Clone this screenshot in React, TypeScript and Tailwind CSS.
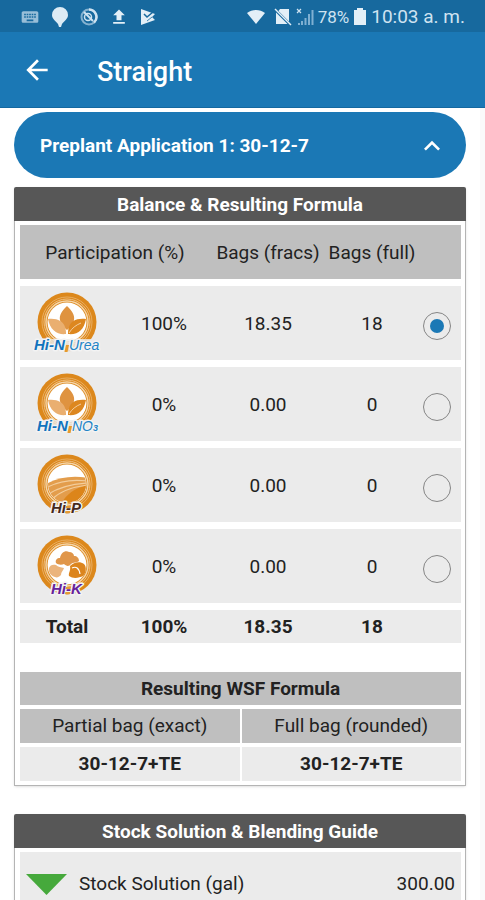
import { useState, type ReactNode } from "react";
import { MdArrowBack, MdExpandLess, MdFileUpload, MdKeyboard } from "react-icons/md";

type Product = {
  id: string;
  name: string;
  percent: string;
  fracs: string;
  full: string;
  logo: ReactNode;
};

function LogoBase({ id, label, children }: { id: string; label: string; children: ReactNode }) {
  return (
    <svg width="70" height="66" viewBox="0 0 70 66" role="img" aria-label={label} className="shrink-0">
      <defs>
        <clipPath id={id}>
          <circle cx="35" cy="32" r="19" />
        </clipPath>
      </defs>
      <circle cx="35" cy="32" r="29.5" fill="#dc881c" />
      <circle cx="35" cy="32" r="25" fill="none" stroke="#e9ae62" strokeWidth="1" />
      <circle cx="35" cy="32" r="23" fill="none" stroke="#efc084" strokeWidth="1" />
      <circle cx="35" cy="32" r="21" fill="none" stroke="#f5d6ab" strokeWidth="1.4" />
      <circle cx="35" cy="32" r="19.5" fill="#fff" />
      {children}
    </svg>
  );
}

const outlined = {
  fontFamily: '"Liberation Sans", Arial, sans-serif',
  fontStyle: "italic",
  stroke: "#f3f3f3",
  strokeWidth: 3,
  strokeLinejoin: "round",
  paintOrder: "stroke",
} as const;

function Leaves() {
  return (
    <g>
      <path d="M35 16c5 5 8 9 7 14-1 5-4 7-7 10-3-3-6-5-7-10-1-5 2-9 7-14z" fill="#df9340" />
      <path d="M16 29c9-1 15 2 17 8 1 3 1 5 1 7-9 1-16-4-18-15z" fill="#eaaf70" />
      <path d="M54 29c-10-1-15 2-17 8-1 3-1 5-1 7 10 1 16-4 18-15z" fill="#dd871f" />
      <path d="M37 43c3-5 7-8 12-10" fill="none" stroke="#f8dfc0" strokeWidth="0.8" />
    </g>
  );
}

function NitrogenLogo({ kind }: { kind: "urea" | "no3" }) {
  const urea = kind === "urea";
  return (
    <LogoBase id={`clip-${kind}`} label={urea ? "Hi-N Urea" : "Hi-N NO3"}>
      <Leaves />
      <path d="M1 49h68v14H1z" fill="#ebebeb" opacity="0.8" />
      <text x={urea ? 2 : 5} y="60" fontSize="15" fontWeight="700" fill="#1173bd" {...outlined}>
        Hi-N
      </text>
      <text x={urea ? 37 : 40} y="60" fontSize="14" fill="#2384c6" {...outlined}>
        {urea ? "Urea" : "NO"}
        {!urea && (
          <tspan fontSize="9" fontWeight="700">
            3
          </tspan>
        )}
      </text>
      <path d={urea ? "M34 55h3l-1.500 7h-3z" : "M37 55h3l-1.500 7h-3z"} fill="#e69a2c" />
    </LogoBase>
  );
}

function PhosphorusLogo() {
  return (
    <LogoBase id="clip-p" label="Hi-P">
      <g clipPath="url(#clip-p)">
        <path d="M14 32c12-7 28-9 42-6v28H14z" fill="#e39d4c" />
        <path d="M28 54c5-11 14-18 28-21v21z" fill="#dc851a" />
        <path d="M14 36c12-7 26-9 42-7M15 43c10-7 22-11 41-12M19 48c8-8 19-13 37-15" fill="none" stroke="#f3cd9b" strokeWidth="1.200" />
      </g>
      <text x="19" y="61" fontSize="15" fontWeight="700" fill="#47291d" {...outlined}>
        Hi-P
      </text>
      <path d="M34 54h5l-.5 2h-5zM33.500 59h5l-.5 2h-5z" fill="#e39a36" />
    </LogoBase>
  );
}

function PotassiumLogo() {
  return (
    <LogoBase id="clip-k" label="Hi-K">
      <path d="M24 30c-1-3 1-5 4-5 1-5 5-8 9-6 3 0 5 2 5 4 3 0 5 2 5 5-2 2-6 1-8 3-2 3-5 2-7 0-2 1-6 1-8-1z" fill="#e0964a" />
      <path d="M17 35c1-3 4-4 7-3 2 2 5 2 8 3-1 3-3 4-3 7-2 2-4 3-6 2-4-1-7-5-6-9z" fill="#ebb47c" />
      <path d="M38 33c4-4 10-5 14-2 3 3 2 9-1 12-4 2-10 3-14 0-1-3 2-5 1-10z" fill="#dc851e" />
      <path d="M40 35c4-2 7 0 8 6" fill="none" stroke="#fff" strokeWidth="1.200" />
      <text x="19" y="61" fontSize="15" fontWeight="700" fill="#66229b" {...outlined}>
        Hi-K
      </text>
      <path d="M34 54h5l-.5 2h-5zM33.500 59h5l-.5 2h-5z" fill="#e39a36" />
    </LogoBase>
  );
}

const products: Product[] = [
  { id: "urea", name: "Hi-N Urea", percent: "100%", fracs: "18.35", full: "18", logo: <NitrogenLogo kind="urea" /> },
  { id: "no3", name: "Hi-N NO3", percent: "0%", fracs: "0.00", full: "0", logo: <NitrogenLogo kind="no3" /> },
  { id: "p", name: "Hi-P", percent: "0%", fracs: "0.00", full: "0", logo: <PhosphorusLogo /> },
  { id: "k", name: "Hi-K", percent: "0%", fracs: "0.00", full: "0", logo: <PotassiumLogo /> },
];

function StatusBar() {
  return (
    <div className="flex h-8 shrink-0 items-center justify-between bg-[#17699e] px-5 pt-[2px] text-[#cfe3f1]">
      <div className="flex items-center gap-[11px]">
        <MdKeyboard className="size-5 opacity-70" />
        <svg width="18" height="20" viewBox="0 0 18 20" fill="#dcebf5">
          <path d="M9 0a8 8 0 0 1 8 8c0 4-4 6-6 9l-1 3H8l-1-3C5 14 1 12 1 8a8 8 0 0 1 8-8z" />
        </svg>
        <svg width="18" height="18" viewBox="0 0 18 18" fill="none" stroke="#cfe3f1">
          <circle cx="9" cy="9" r="7.500" strokeWidth="2" opacity="0.6" />
          <path d="M9 1.500a7.500 7.500 0 0 1 5 13" strokeWidth="2.500" />
          <path d="M4 4l9 9" strokeWidth="2" />
          <circle cx="8" cy="9" r="3.500" strokeWidth="1.500" />
        </svg>
        <MdFileUpload className="size-5 text-[#e3eff7]" />
        <svg width="16" height="18" viewBox="0 0 16 18">
          <path d="M1 1l14 5-3 3 3 3L1 17z" fill="#e3eff7" />
          <path d="M4 6l3 3 6-5" fill="none" stroke="#17699e" strokeWidth="1.500" />
          <path d="M12 9l-5 4" fill="none" stroke="#17699e" strokeWidth="0.800" />
        </svg>
      </div>
      <div className="flex items-center gap-1 text-[19px] leading-6">
        <svg width="20" height="16" viewBox="0 0 20 16" fill="#e3eff7" className="mr-1">
          <path d="M1 4c5-4 13-4 18 0l-9 11z" />
        </svg>
        <svg width="18" height="18" viewBox="0 0 18 18">
          <path d="M6 1h9v12.500L4.500 3zM2 4.500L13.500 16H2z" fill="#e3eff7" />
          <path d="M1 1l16 16" stroke="#e3eff7" strokeWidth="1.500" />
        </svg>
        <svg width="18" height="18" viewBox="0 0 18 18">
          <path d="M1 1l4 4M5 1L1 5" stroke="#cfe3f1" strokeWidth="1.200" />
          <path d="M3 17v-2M6 17v-4M9.500 17V10M13 17V6M16.500 17V2" stroke="#7fb0d2" strokeWidth="2" />
        </svg>
        <span className="text-[17px]">78%</span>
        <svg width="14" height="18" viewBox="0 0 14 18" fill="#e3eff7">
          <path d="M4 0h6v2h3v15H1V2h3z" />
        </svg>
        <span>10:03 a. m.</span>
      </div>
    </div>
  );
}

function Card({ title, children }: { title: string; children: ReactNode }) {
  return (
    <section className="rounded-xs shadow-sm">
      <h2 className="h-[34px] rounded-t-xs bg-[#575757] text-center leading-[36px] font-bold text-white">{title}</h2>
      <div className="border-x border-b border-[#b4b4b4] p-1 pl-[5px]">{children}</div>
    </section>
  );
}

const productCols = "grid grid-cols-[94fr_100fr_108fr_100fr_39fr] items-center text-center";

export default function App() {
  const [selected, setSelected] = useState("urea");
  const [open, setOpen] = useState(true);

  return (
    <div className="flex h-screen flex-col overflow-hidden bg-[#fafafa] font-['Roboto',sans-serif] text-[19px] leading-6 text-[#222]">
      <StatusBar />
      <header className="flex h-[76px] shrink-0 items-center gap-11 border-b border-[#1468a0] bg-[#1b78b5] px-[21px] text-white">
        <button type="button" aria-label="Back">
          <MdArrowBack className="size-8" />
        </button>
        <h1 className="pt-1 text-[27px] leading-8 font-medium">Straight</h1>
      </header>

      <main className="mr-[5px] min-h-0 flex-1 overflow-y-auto bg-white px-[14px] pt-1 [scrollbar-width:none]">
        <button
          type="button"
          aria-expanded={open}
          onClick={() => setOpen(!open)}
          className="flex h-[66px] w-full items-center justify-between rounded-full bg-[#1b78b5] pt-[2px] pr-[18px] pl-[26px] text-left font-bold text-white"
        >
          <span>Preplant Application 1: 30-12-7</span>
          <MdExpandLess className="size-8" />
        </button>

        {open && (
          <div className="flex flex-col gap-7 pt-[9px] pb-7">
            <Card title="Balance & Resulting Formula">
              <table className="flex flex-col gap-[7px]">
                <thead className="block">
                  <tr className={`${productCols} h-[54px] bg-[#bfbfbf] pt-[2px]`}>
                    <th className="col-span-2 pr-1 font-normal whitespace-nowrap">Participation (%)</th>
                    <th className="font-normal whitespace-nowrap">Bags (fracs)</th>
                    <th className="font-normal whitespace-nowrap">Bags (full)</th>
                  </tr>
                </thead>
                <tbody className="flex flex-col gap-[7px]">
                  {products.map((p) => (
                    <tr key={p.id} className={`${productCols} h-[74px] bg-[#ebebeb]`}>
                      <td className="flex justify-center">{p.logo}</td>
                      <td className="pt-[2px]">{p.percent}</td>
                      <td className="pt-[2px]">{p.fracs}</td>
                      <td className="pt-[2px]">{p.full}</td>
                      <td className="flex justify-center pt-[6px] pr-[10px]">
                        <input
                          type="radio"
                          name="product"
                          aria-label={p.name}
                          checked={selected === p.id}
                          onChange={() => setSelected(p.id)}
                          className="size-7 shrink-0 appearance-none rounded-full border border-[#858585] bg-clip-content p-[6px] checked:bg-[#1b78b5]"
                        />
                      </td>
                    </tr>
                  ))}
                </tbody>
                <tfoot className="block">
                  <tr className={`${productCols} h-[33px] bg-[#ebebeb] font-bold`}>
                    <th>Total</th>
                    <td>100%</td>
                    <td>18.35</td>
                    <td>18</td>
                  </tr>
                </tfoot>
              </table>

              <table className="mt-[29px] flex flex-col gap-1 text-center leading-[34px]">
                <caption className="block h-[33px] bg-[#bfbfbf] font-bold">Resulting WSF Formula</caption>
                <thead className="block">
                  <tr className="grid grid-cols-2 gap-[2px]">
                    <th className="bg-[#bfbfbf] font-normal">Partial bag (exact)</th>
                    <th className="bg-[#bfbfbf] font-normal">Full bag (rounded)</th>
                  </tr>
                </thead>
                <tbody className="block">
                  <tr className="grid grid-cols-2 gap-[2px] font-bold">
                    <td className="bg-[#ebebeb]">30-12-7+TE</td>
                    <td className="bg-[#ebebeb]">30-12-7+TE</td>
                  </tr>
                </tbody>
              </table>
            </Card>

            <Card title="Stock Solution & Blending Guide">
              <div className="flex h-16 items-center gap-3 bg-[#ebebeb] px-[6px]">
                <svg width="41" height="21" viewBox="0 0 41 21" fill="#46a93c">
                  <path d="M0 0h41L20.500 21z" />
                </svg>
                <span className="flex-1">Stock Solution (gal)</span>
                <span>300.00</span>
              </div>
            </Card>
          </div>
        )}
      </main>
    </div>
  );
}
